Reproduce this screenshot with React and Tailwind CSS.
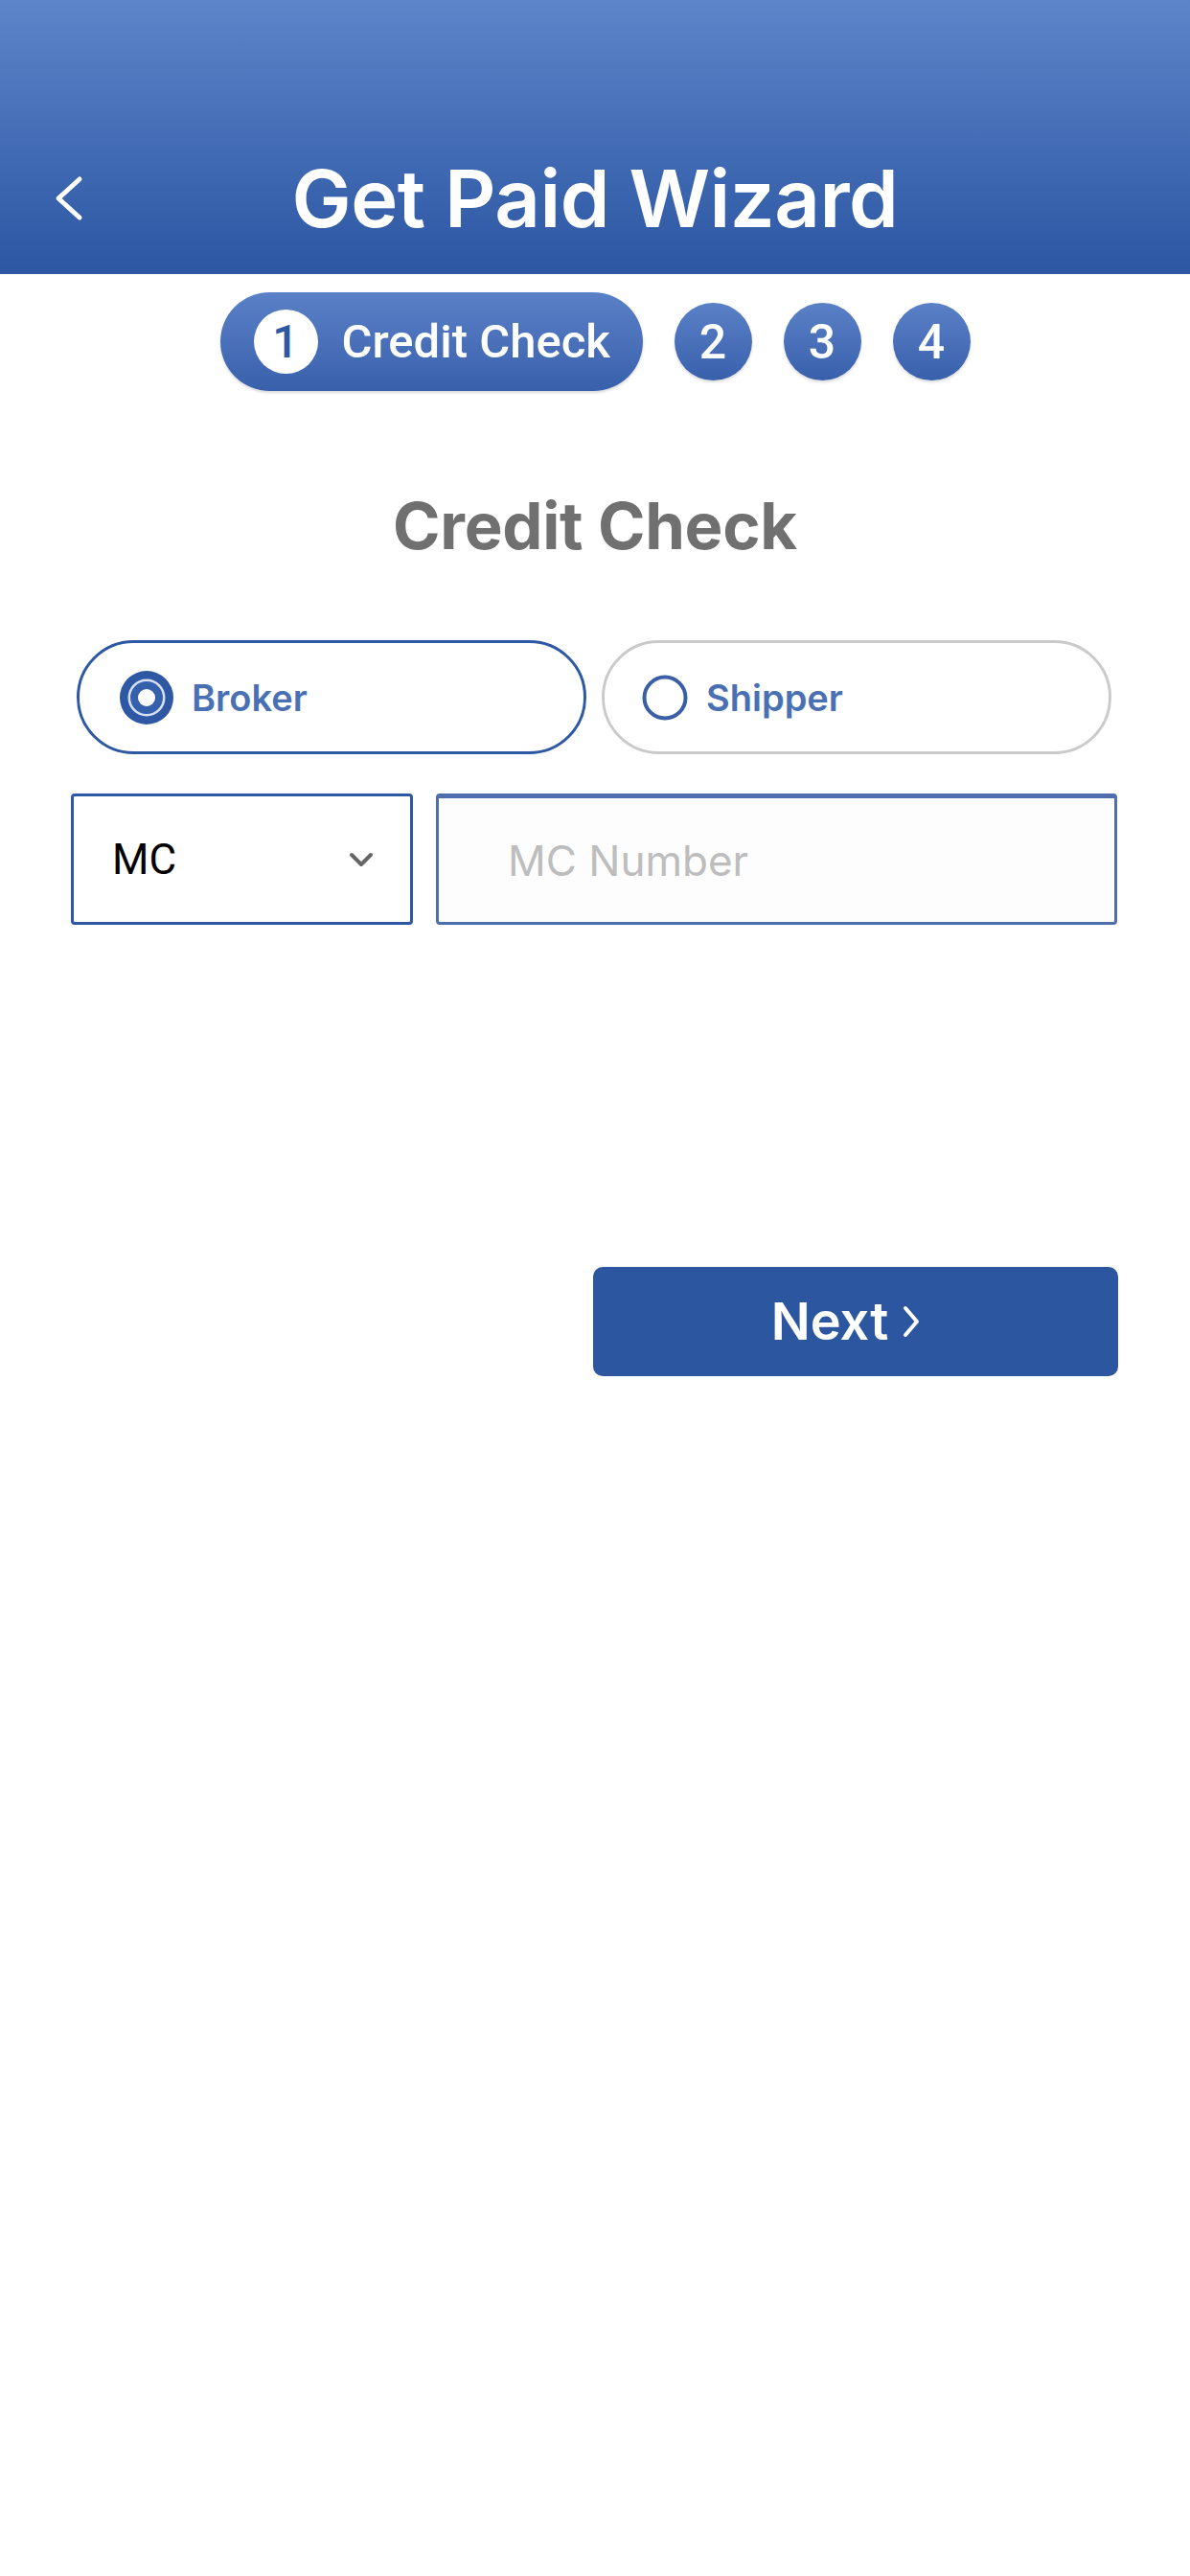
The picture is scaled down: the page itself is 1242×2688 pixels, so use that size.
import React from 'react';

const STEPS = ['2', '3', '4'];

function BackIcon() {
  return (
    <svg width="40" height="56" viewBox="0 0 40 56" fill="none" stroke="white" strokeWidth="5" strokeLinecap="round" strokeLinejoin="round">
      <polyline points="30,8 8,28 30,48" />
    </svg>
  );
}

function RadioOn() {
  return (
    <svg width="56" height="56" viewBox="0 0 56 56">
      <circle cx="28" cy="28" r="28" fill="#2e58a4" />
      <circle cx="28" cy="28" r="19.5" fill="#d6e0f2" />
      <circle cx="28" cy="28" r="17" fill="#3560ab" />
      <circle cx="28" cy="28" r="9" fill="white" />
    </svg>
  );
}

function RadioOff() {
  return (
    <svg width="48" height="48" viewBox="0 0 48 48">
      <circle cx="24" cy="24" r="21.5" fill="white" stroke="#3a5fa5" strokeWidth="4" />
    </svg>
  );
}

export default function App() {
  return (
    <div className="w-[1242px] h-[2688px] bg-white" style={{ fontFamily: "Inter, 'Noto Sans', sans-serif" }}>
      {/* Header */}
      <div className="h-[286px] bg-gradient-to-b from-[#5c85ca] to-[#2d56a3] pt-[157px]">
        <div className="grid grid-cols-[140px_1fr_140px] items-center h-[100px]">
          <div className="pl-[53px] flex items-center">
            <BackIcon />
          </div>
          <h1 className="text-center text-white font-semibold text-[83px] leading-none tracking-[-0.5px]">
            Get Paid Wizard
          </h1>
          <div />
        </div>
      </div>

      {/* Steps */}
      <div className="flex justify-center items-center gap-[33px] mt-[19px] h-[103px]" style={{ fontFamily: "Roboto, 'Noto Sans', sans-serif" }}>
        <div className="h-[103px] w-[441px] rounded-full bg-gradient-to-b from-[#5a81c7] to-[#3960ab] flex items-center pl-[35px] gap-[25px] shadow-[0_2px_3px_rgba(0,0,0,0.15)]">
          <div className="w-[67px] h-[67px] rounded-full bg-white flex items-center justify-center text-[#2e58a4] text-[48px] font-medium leading-none">
            1
          </div>
          <span className="text-white text-[49px] font-medium leading-none">Credit Check</span>
        </div>
        {STEPS.map(s => (
          <div
            key={s}
            className="w-[81px] h-[81px] rounded-full bg-gradient-to-b from-[#5a81c7] to-[#3960ab] flex items-center justify-center text-white text-[50px] font-medium leading-none shadow-[0_2px_3px_rgba(0,0,0,0.15)]"
          >
            {s}
          </div>
        ))}
      </div>

      {/* Heading */}
      <h2 className="mt-[107px] text-center text-[#707070] font-bold text-[67px] leading-none tracking-[-0.3px]">
        Credit Check
      </h2>

      {/* Type radios */}
      <div className="mt-[86px] px-[80px] pr-[82px] grid grid-cols-2 gap-[16px]">
        <div className="h-[119px] rounded-full border-[3px] border-[#2e58a4] flex items-center pl-[42px] gap-[19px]">
          <RadioOn />
          <span className="text-[38px] font-semibold text-[#4a70b4] leading-none">Broker</span>
        </div>
        <div className="h-[119px] rounded-full border-[3px] border-[#cacaca] flex items-center pl-[39px] gap-[19px]">
          <RadioOff />
          <span className="text-[38px] font-semibold text-[#4a70b4] leading-none">Shipper</span>
        </div>
      </div>

      {/* MC inputs */}
      <div className="mt-[41px] pl-[74px] pr-[76px] flex gap-[24px]">
        <div className="w-[357px] h-[137px] border-[3px] border-[#2e58a4] rounded-[4px] bg-white flex items-center justify-between pl-[40px] pr-[38px]">
          <span className="text-[44px] text-black leading-none" style={{ fontFamily: "Roboto, sans-serif" }}>MC</span>
          <svg width="26" height="16" viewBox="0 0 26 16" fill="none" stroke="#666" strokeWidth="4" strokeLinecap="round" strokeLinejoin="round">
            <polyline points="3,3 13,13 23,3" />
          </svg>
        </div>
        <div className="flex-1 h-[137px] border-[3px] border-[#4d6fae] border-t-[5px] rounded-[4px] bg-[#fdfdfd] flex items-center pl-[72px]">
          <span className="text-[44px] text-[#bdbdbd] leading-none">MC Number</span>
        </div>
      </div>

      {/* Next */}
      <div className="mt-[357px] flex justify-end pr-[75px]">
        <button className="w-[548px] h-[114px] rounded-[10px] bg-[#2c56a0] flex items-center justify-center gap-[14px] pr-[20px] text-white">
          <span className="text-[54px] font-semibold leading-none">Next</span>
          <svg width="20" height="34" viewBox="0 0 20 34" fill="none" stroke="white" strokeWidth="4" strokeLinecap="round" strokeLinejoin="round">
            <polyline points="4,3 16,17 4,31" />
          </svg>
        </button>
      </div>
    </div>
  );
}
